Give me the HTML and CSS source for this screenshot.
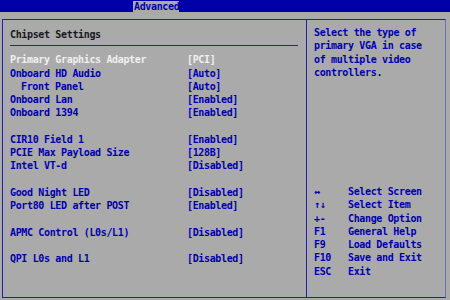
FILE: index.html
```html
<!DOCTYPE html>
<html lang="en">
<head>
    <meta charset="UTF-8">
    <title>Chipset Settings</title>
    <link rel="stylesheet" href="styles.css">
</head>
<body>
    <div class="topbar">
        <span class="tab">Advanced</span>
    </div>

    <div class="frame">
        <div class="settings">
            <div class="title">Chipset Settings</div>
            <div class="rows">
                <div class="row active"><span class="name">Primary Graphics Adapter</span><span class="value">[PCI]</span></div>
                <div class="row"><span class="name">Onboard HD Audio</span><span class="value">[Auto]</span></div>
                <div class="row"><span class="name sub">Front Panel</span><span class="value">[Auto]</span></div>
                <div class="row"><span class="name">Onboard Lan</span><span class="value">[Enabled]</span></div>
                <div class="row"><span class="name">Onboard 1394</span><span class="value">[Enabled]</span></div>
                <div class="row blank"></div>
                <div class="row"><span class="name">CIR10 Field 1</span><span class="value">[Enabled]</span></div>
                <div class="row"><span class="name">PCIE Max Payload Size</span><span class="value">[128B]</span></div>
                <div class="row"><span class="name">Intel VT-d</span><span class="value">[Disabled]</span></div>
                <div class="row blank"></div>
                <div class="row"><span class="name">Good Night LED</span><span class="value">[Disabled]</span></div>
                <div class="row"><span class="name">Port80 LED after POST</span><span class="value">[Enabled]</span></div>
                <div class="row blank"></div>
                <div class="row"><span class="name">APMC Control (L0s/L1)</span><span class="value">[Disabled]</span></div>
                <div class="row blank"></div>
                <div class="row"><span class="name">QPI L0s and L1</span><span class="value">[Disabled]</span></div>
            </div>
        </div>

        <div class="help">
            <div class="help-text">Select the type of<br>primary VGA in case<br>of multiple video<br>controllers.</div>
            <div class="keys">
                <div class="key"><span class="k">&harr;</span><span>Select Screen</span></div>
                <div class="key"><span class="k">&uarr;&darr;</span><span>Select Item</span></div>
                <div class="key"><span class="k">+-</span><span>Change Option</span></div>
                <div class="key"><span class="k">F1</span><span>General Help</span></div>
                <div class="key"><span class="k">F9</span><span>Load Defaults</span></div>
                <div class="key"><span class="k">F10</span><span>Save and Exit</span></div>
                <div class="key"><span class="k">ESC</span><span>Exit</span></div>
            </div>
        </div>
    </div>
</body>
</html>
```

FILE: styles.css
```css
body {
    margin: 0;
    width: 450px;
    height: 300px;
    overflow: hidden;
    background-color: #aaaaaa;
    color: #0000b0;
    font-family: "DejaVu Sans Mono", "Liberation Mono", monospace;
    font-weight: bold;
    font-size: 10px;
    letter-spacing: -0.35px;
    line-height: 13.25px;
}
.topbar {
    height: 12px;
    background-color: #0000a8;
    padding-left: 133px;
}
.tab {
    display: inline-block;
    width: 46px;
    height: 12px;
    line-height: 12px;
    background-color: #aaaaaa;
    color: #0000b0;
    padding-left: 1px;
    box-sizing: border-box;
}
.frame {
    display: flex;
    margin: 7px 0 0 2px;
    width: 444px;
    height: 279px;
    box-sizing: border-box;
    border: 1px solid #2020b0;
    border-right-color: #7070b0;
}
.settings {
    width: 304px;
    padding: 8px 0 0 7px;
    box-sizing: border-box;
    border-right: 1px solid #2020b0;
}
.title {
    color: #181820;
    margin-right: 8px;
    padding-bottom: 4px;
    border-bottom: 1px solid #2020b0;
    margin-bottom: 7px;
}
.row {
    display: flex;
    height: 13.25px;
    white-space: pre;
}
.name {
    width: 177px;
}
.name.sub {
    padding-left: 11px;
    width: 166px;
}
.row.active {
    color: #f0f0f0;
}
.help {
    flex: 1;
    padding: 6px 0 0 7px;
}
.keys {
    margin-top: 106px;
}
.key {
    display: flex;
    height: 13.25px;
}
.k {
    width: 34px;
}
```
